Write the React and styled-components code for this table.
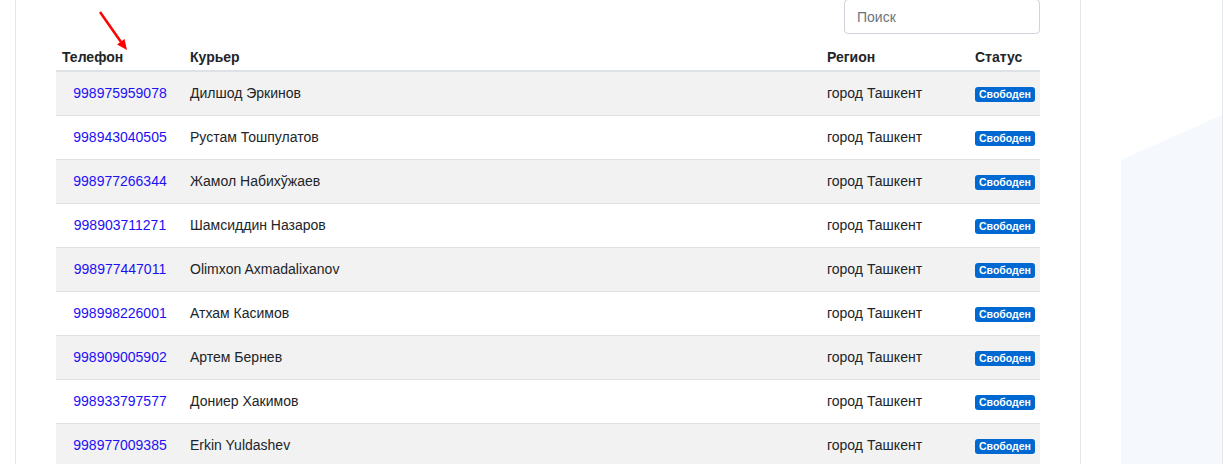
import React from "react";
import styled, { createGlobalStyle } from "styled-components";

const GlobalStyle = createGlobalStyle`
  html, body {
    margin: 0;
    height: 100%;
    overflow: hidden;
    background: #fff;
    font-family: "Liberation Sans", Arial, sans-serif;
    color: #212529;
  }
`;

const Page = styled.div`
  position: relative;
  display: flex;
  height: 100vh;
`;

const Gutter = styled.div`
  width: 15px;
  flex-shrink: 0;
`;

const Card = styled.div`
  width: 984px;
  flex-shrink: 0;
  padding: 0 40px;
  border-left: 1px solid #e4e7eb;
  border-right: 1px solid #e4e7eb;
  background: #fff;
`;

const Side = styled.div`
  flex: 1;
  position: relative;
  border-right: 1px solid #e6e8eb;
  overflow: hidden;
  &::before {
    content: "";
    position: absolute;
    inset: 0;
    background: #f5f8fc;
    clip-path: polygon(40px 160px, 100% 115px, 100% 100%, 40px 100%);
  }
`;

const Toolbar = styled.div`
  display: flex;
  justify-content: flex-end;
  margin-top: -1px;
  margin-bottom: 7px;
`;

const Search = styled.input`
  box-sizing: border-box;
  width: 196px;
  height: 35px;
  padding: 0 12px;
  border: 1px solid #ced4da;
  border-radius: 4px;
  font-family: inherit;
  font-size: 14px;
  color: #495057;
  outline: none;
  &::placeholder {
    color: #6c757d;
  }
`;

const Table = styled.table`
  width: 984px;
  table-layout: fixed;
  border-collapse: separate;
  border-spacing: 0;
  font-size: 14px;
`;

const Th = styled.th`
  box-sizing: border-box;
  width: ${(p) => p.$w}px;
  padding: 6px 6px 3px;
  line-height: 20px;
  text-align: left;
  font-weight: 700;
  border-bottom: 2px solid #dee2e6;
`;

const Row = styled.tr`
  background: ${(p) => (p.$odd ? "#f2f2f2" : "#fff")};
`;

const Td = styled.td`
  padding: 11px 6px 12px;
  line-height: 20px;
  border-bottom: 1px solid #dee2e6;
  text-align: ${(p) => (p.$center ? "center" : "left")};
  white-space: nowrap;
`;

const Phone = styled.a`
  color: #1d0ff5;
  text-decoration: none;
`;

const Badge = styled.span`
  display: inline-block;
  padding: 2px 4px;
  font-size: 10.5px;
  font-weight: 700;
  line-height: 1;
  color: #fff;
  background: #0068d1;
  border-radius: 3px;
  vertical-align: 0;
`;

const Arrow = styled.svg`
  position: absolute;
  left: 0;
  top: 0;
  pointer-events: none;
`;

const couriers = [
  ["998975959078", "Дилшод Эркинов"],
  ["998943040505", "Рустам Тошпулатов"],
  ["998977266344", "Жамол Набихўжаев"],
  ["998903711271", "Шамсиддин Назаров"],
  ["998977447011", "Olimxon Axmadalixanov"],
  ["998998226001", "Атхам Касимов"],
  ["998909005902", "Артем Бернев"],
  ["998933797577", "Дониер Хакимов"],
  ["998977009385", "Erkin Yuldashev"],
];

const App = () => {
  return (
    <>
      <GlobalStyle />
      <Page>
        <Gutter />
        <Card>
          <Toolbar>
            <Search placeholder="Поиск" />
          </Toolbar>
          <Table>
            <thead>
              <tr>
                <Th $w={128}>Телефон</Th>
                <Th $w={637}>Курьер</Th>
                <Th $w={148}>Регион</Th>
                <Th $w={71}>Статус</Th>
              </tr>
            </thead>
            <tbody>
              {couriers.map(([phone, name], i) => (
                <Row key={phone} $odd={i % 2 === 0}>
                  <Td $center>
                    <Phone href="#">{phone}</Phone>
                  </Td>
                  <Td>{name}</Td>
                  <Td>город Ташкент</Td>
                  <Td>
                    <Badge>Свободен</Badge>
                  </Td>
                </Row>
              ))}
            </tbody>
          </Table>
        </Card>
        <Side />
        <Arrow width="140" height="60" viewBox="0 0 140 60">
          <line x1="100" y1="12" x2="121" y2="42" stroke="#ff0000" strokeWidth="2.5" />
          <polygon points="127,50 124.5,39 117,44.5" fill="#ff0000" />
        </Arrow>
      </Page>
    </>
  );
};

export default App;
